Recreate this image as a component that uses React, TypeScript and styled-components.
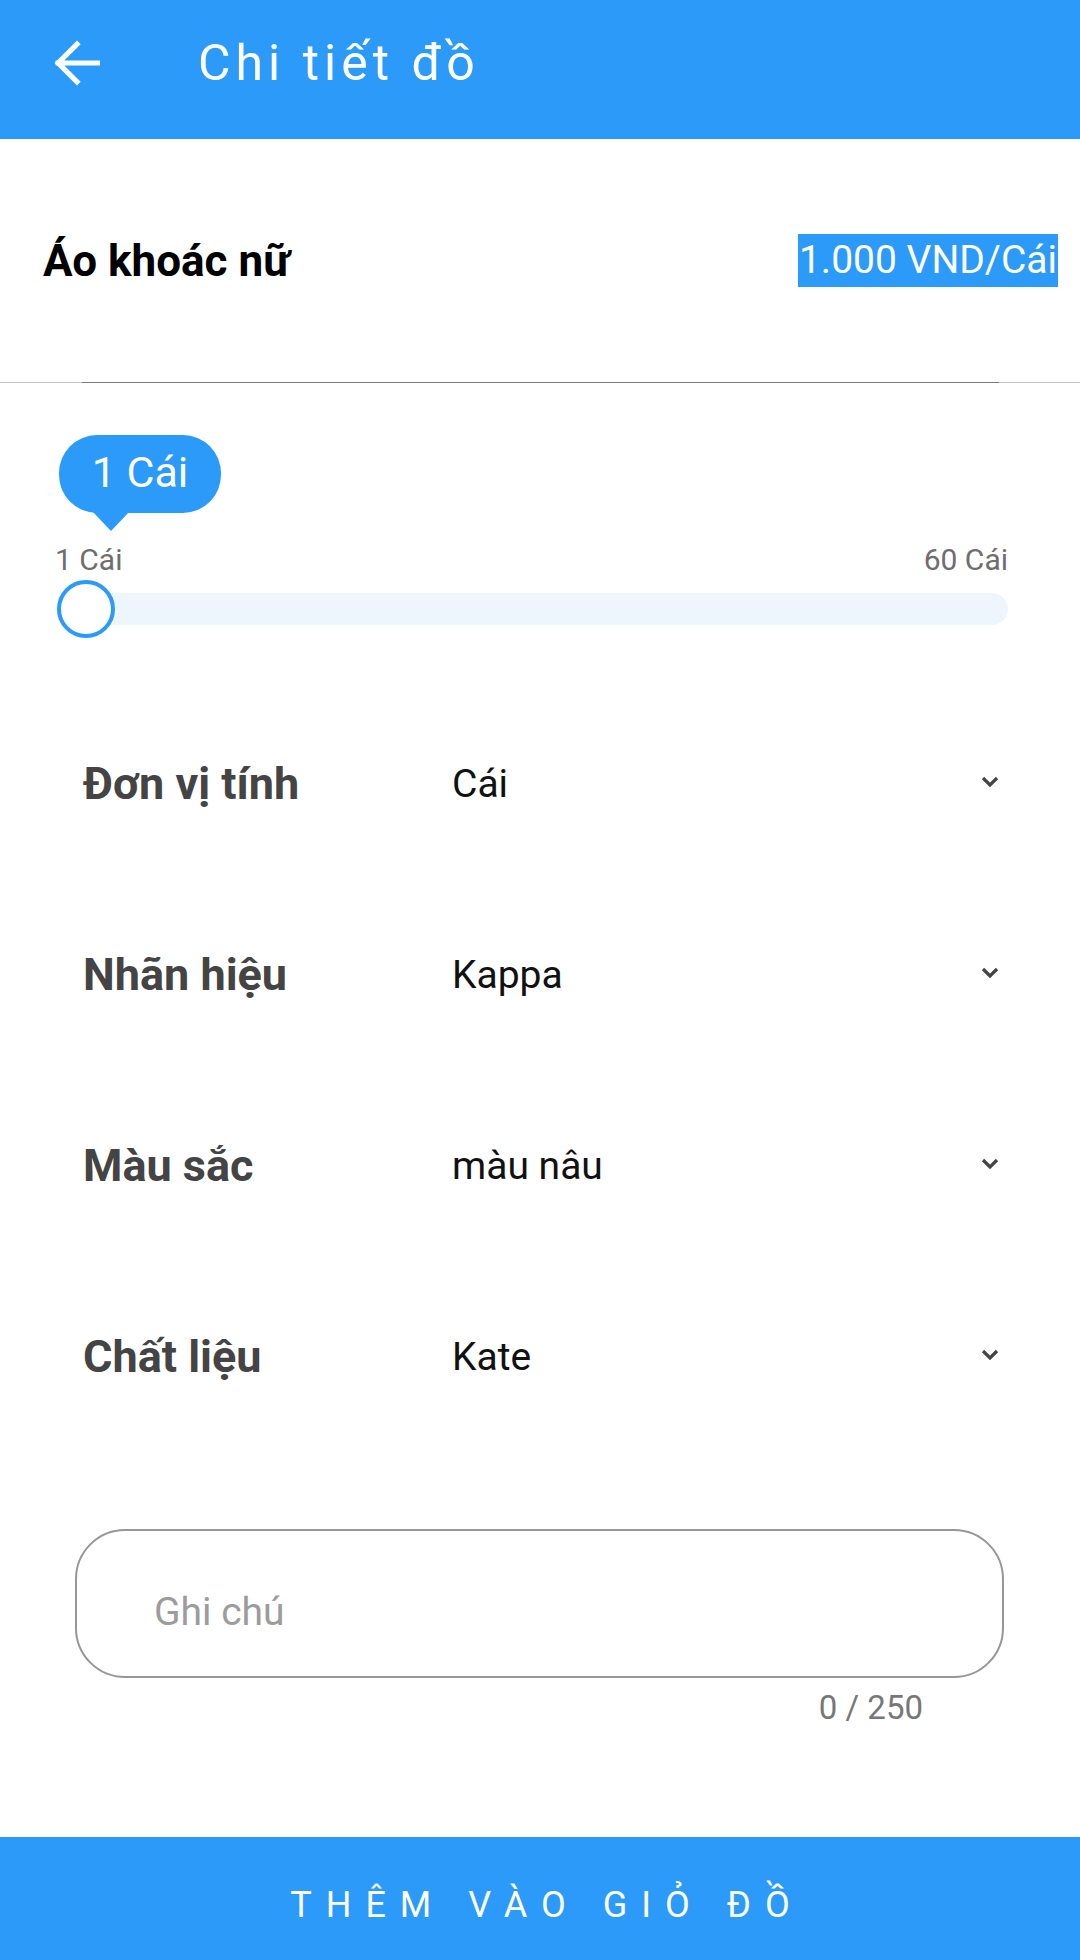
import React from "react";
import styled, { createGlobalStyle } from "styled-components";

const BLUE = "#2B9AF9";

const Global = createGlobalStyle`
  html, body { margin: 0; padding: 0; background: #fff; }
  body { font-family: Roboto, "Noto Sans", "Liberation Sans", sans-serif; }
  * { box-sizing: border-box; }
`;

const Page = styled.div`
  width: 1080px;
  min-height: 1960px;
  display: flex;
  flex-direction: column;
  background: #fff;
`;

const Header = styled.header`
  height: 139px;
  background: ${BLUE};
  display: flex;
  align-items: center;
  padding: 0 0 14px 47px;
`;

const BackButton = styled.button`
  width: 60px;
  height: 60px;
  border: none;
  background: transparent;
  padding: 0;
  display: flex;
  align-items: center;
  justify-content: center;
  color: #fff;
`;

const Title = styled.h1`
  margin: 0 0 0 91px;
  font-size: 50px;
  font-weight: 400;
  letter-spacing: 5px;
  color: #fff;
`;

const ProductRow = styled.div`
  height: 243px;
  display: flex;
  align-items: center;
  justify-content: space-between;
  padding: 0 22px 0 43px;
`;

const ProductName = styled.div`
  font-size: 44px;
  font-weight: 700;
  color: #000;
`;

const Price = styled.span`
  font-size: 39px;
  line-height: 53px;
  color: #fff;
  background: ${BLUE};
  padding: 0 1px;
`;

const Divider = styled.div`
  height: 1px;
  background: #c4c4c4;
  display: flex;
  justify-content: center;
  &::after {
    content: "";
    width: 917px;
    height: 1px;
    background: #7a7a7a;
  }
`;

const SliderSection = styled.div`
  padding: 52px 72px 0 55px;
  display: flex;
  flex-direction: column;
`;

const Bubble = styled.div`
  position: relative;
  margin-left: 4px;
  width: 162px;
  height: 78px;
  border-radius: 38px;
  background: ${BLUE};
  color: #fff;
  font-size: 43px;
  display: flex;
  align-items: center;
  justify-content: center;
  padding-bottom: 4px;
  &::after {
    content: "";
    position: absolute;
    left: 33px;
    top: 76px;
    border-left: 19px solid transparent;
    border-right: 19px solid transparent;
    border-top: 20px solid ${BLUE};
  }
`;

const RangeLabels = styled.div`
  margin-top: 29px;
  display: flex;
  justify-content: space-between;
  font-size: 30px;
  line-height: 36px;
  color: #6e6e6e;
`;

const TrackWrap = styled.div`
  position: relative;
  height: 58px;
  margin-top: 2px;
  display: flex;
  align-items: center;
  padding-left: 2px;
`;

const Track = styled.div`
  flex: 1;
  height: 32px;
  border-radius: 16px;
  background: #eef6fd;
`;

const Thumb = styled.div`
  position: absolute;
  left: 2px;
  top: 0;
  width: 58px;
  height: 58px;
  border-radius: 50%;
  border: 4px solid ${BLUE};
  background: #fff;
`;

const Fields = styled.div`
  margin-top: 50px;
  display: flex;
  flex-direction: column;
`;

const SelectRow = styled.div`
  height: 191px;
  display: flex;
  align-items: center;
  padding: 0 81px 0 83px;
`;

const FieldLabel = styled.div`
  width: 369px;
  font-size: 45px;
  font-weight: 700;
  color: #444;
`;

const FieldValue = styled.div`
  flex: 1;
  font-size: 39px;
  color: #111;
`;

const Chevron = styled.svg`
  width: 18px;
  height: 12px;
  margin-bottom: 4px;
`;

const NoteWrap = styled.div`
  margin: 77px 76px 0 75px;
  display: flex;
  flex-direction: column;
`;

const NoteBox = styled.div`
  height: 149px;
  border: 2.5px solid #979797;
  border-radius: 50px;
  display: flex;
  align-items: center;
  padding: 17px 40px 0 75px;
`;

const NoteInput = styled.input`
  border: none;
  outline: none;
  width: 100%;
  font-family: Roboto, "Noto Sans", sans-serif;
  font-size: 39px;
  color: #222;
  background: transparent;
  &::placeholder { color: #9c9c9c; }
`;

const Counter = styled.div`
  align-self: flex-end;
  margin: 10px 81px 0 0;
  font-size: 33px;
  color: #777;
`;

const AddButton = styled.button`
  margin-top: auto;
  height: 123px;
  width: 100%;
  border: none;
  background: ${BLUE};
  color: #fff;
  font-family: Roboto, "Noto Sans", sans-serif;
  font-size: 36px;
  letter-spacing: 14px;
  padding: 12px 0 0 14px;
`;

const fields = [
  { label: "Đơn vị tính", value: "Cái" },
  { label: "Nhãn hiệu", value: "Kappa" },
  { label: "Màu sắc", value: "màu nâu" },
  { label: "Chất liệu", value: "Kate" },
];

export default function App() {
  return (
    <Page>
      <Global />
      <Header>
        <BackButton aria-label="Quay lại">
          <svg width="46" height="46" viewBox="0 0 44 44" fill="none">
            <path d="M42 22H4M22 4L4 22L22 40" stroke="#fff" strokeWidth="5" strokeLinecap="square" strokeLinejoin="miter" />
          </svg>
        </BackButton>
        <Title>Chi tiết đồ</Title>
      </Header>

      <ProductRow>
        <ProductName>Áo khoác nữ</ProductName>
        <Price>1.000 VND/Cái</Price>
      </ProductRow>
      <Divider />

      <SliderSection>
        <Bubble>1 Cái</Bubble>
        <RangeLabels>
          <span>1 Cái</span>
          <span>60 Cái</span>
        </RangeLabels>
        <TrackWrap>
          <Track />
          <Thumb />
        </TrackWrap>
      </SliderSection>

      <Fields>
        {fields.map((f) => (
          <SelectRow key={f.label}>
            <FieldLabel>{f.label}</FieldLabel>
            <FieldValue>{f.value}</FieldValue>
            <Chevron viewBox="0 0 18 12" fill="none">
              <path d="M2 2L9 9L16 2" stroke="#444" strokeWidth="3.2" />
            </Chevron>
          </SelectRow>
        ))}
      </Fields>

      <NoteWrap>
        <NoteBox>
          <NoteInput placeholder="Ghi chú" />
        </NoteBox>
        <Counter>0 / 250</Counter>
      </NoteWrap>

      <AddButton>THÊM VÀO GIỎ ĐỒ</AddButton>
    </Page>
  );
}
